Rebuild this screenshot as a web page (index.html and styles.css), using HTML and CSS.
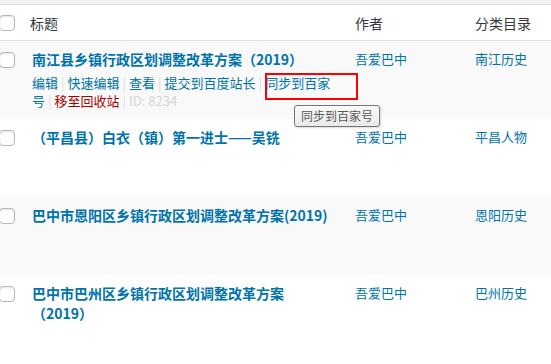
FILE: index.html
```html
<!DOCTYPE html>
<html>
<head>
    <meta charset="UTF-8">
    <title>文章</title>
    <link rel="stylesheet" href="styles.css">
</head>
<body>
    <div class="top-strip"></div>
    <div class="post-list">
        <div class="row head">
            <div class="cb"><span class="box"></span></div>
            <div class="col-title">标题</div>
            <div class="col-author">作者</div>
            <div class="col-cat">分类目录</div>
        </div>

        <div class="row alt">
            <div class="cb"><span class="box"></span></div>
            <div class="col-title">
                <a class="row-title">南江县乡镇行政区划调整改革方案（2019）</a>
                <div class="row-actions"><a>编辑</a><span class="sep">|</span><a>快速编辑</a><span class="sep">|</span><a>查看</a><span class="sep">|</span><a>提交到百度站长</a><span class="sep">|</span><a class="sync">同步到百家号</a><span class="sep">|</span><a class="trash">移至回收站</a><span class="sep">|</span><span class="post-id">ID: 8234</span></div>
            </div>
            <div class="col-author"><a>吾爱巴中</a></div>
            <div class="col-cat"><a>南江历史</a></div>
        </div>

        <div class="row">
            <div class="cb"><span class="box"></span></div>
            <div class="col-title">
                <a class="row-title">（平昌县）白衣（镇）第一进士——吴铣</a>
            </div>
            <div class="col-author"><a>吾爱巴中</a></div>
            <div class="col-cat"><a>平昌人物</a></div>
        </div>

        <div class="row alt">
            <div class="cb"><span class="box"></span></div>
            <div class="col-title">
                <a class="row-title">巴中市恩阳区乡镇行政区划调整改革方案(2019)</a>
            </div>
            <div class="col-author"><a>吾爱巴中</a></div>
            <div class="col-cat"><a>恩阳历史</a></div>
        </div>

        <div class="row">
            <div class="cb"><span class="box"></span></div>
            <div class="col-title">
                <a class="row-title">巴中市巴州区乡镇行政区划调整改革方案（2019）</a>
            </div>
            <div class="col-author"><a>吾爱巴中</a></div>
            <div class="col-cat"><a>巴州历史</a></div>
        </div>
    </div>

    <!-- annotation box and native tooltip drawn over the list -->
    <div class="mark"></div>
    <div class="tooltip">同步到百家号</div>
</body>
</html>
```

FILE: styles.css
```css
body {
    margin: 0;
    padding: 0;
    font-family: "Noto Sans CJK SC", "Liberation Sans", sans-serif;
    background-color: #fff;
    color: #32373c;
    overflow: hidden;
    position: relative;
}
a {
    color: #0073aa;
    text-decoration: none;
}
.top-strip {
    height: 4px;
    background-color: #f1f1f1;
}
.post-list {
    border-top: 1px solid #e1e1e1;
}
.row {
    display: grid;
    grid-template-columns: 32px 323px 120px 1fr;
    height: 78px;
    box-sizing: border-box;
    background-color: #fff;
}
.row.alt {
    background-color: #f9f9f9;
}
.row.head {
    height: 36px;
    border-bottom: 1px solid #e1e1e1;
    align-items: center;
    font-size: 14px;
}
.row.head .col-title {
    margin-left: -2px;
}
.cb {
    padding-top: 11px;
}
.row.head .cb {
    padding-top: 0;
    display: flex;
    align-items: center;
}
.box {
    display: block;
    width: 16px;
    height: 16px;
    margin-left: -1px;
    box-sizing: border-box;
    border: 1px solid #b4b9be;
    border-radius: 4px;
    background-color: #fff;
    box-shadow: inset 0 1px 2px rgba(0,0,0,0.1);
}
.col-title {
    padding-right: 17px;
}
.row:not(.head) > div:not(.cb) {
    padding-top: 8px;
}
.row-title {
    display: block;
    font-size: 14px;
    font-weight: bold;
    line-height: 20px;
}
.col-author, .col-cat {
    font-size: 13px;
    line-height: 20px;
}
.row.head .col-author, .row.head .col-cat {
    font-size: 14px;
}
.row-actions {
    margin-top: 5px;
    font-size: 13px;
    line-height: 18px;
}
.sep {
    color: #ddd;
    padding: 0 3px;
}
.trash {
    color: #a00;
}
.post-id {
    color: #d4d4d4;
}
.mark {
    position: absolute;
    z-index: 2;
    left: 265px;
    top: 73px;
    width: 93px;
    height: 27px;
    box-sizing: border-box;
    border: 2px solid #ff0000;
}
.tooltip {
    position: absolute;
    z-index: 3;
    left: 294px;
    top: 105px;
    width: 86px;
    height: 22px;
    box-sizing: border-box;
    border: 1px solid #767676;
    border-radius: 3px;
    background: linear-gradient(#fbfbfb, #eaeaea);
    box-shadow: 1px 1px 2px rgba(0,0,0,0.15);
    color: #575757;
    font-size: 12px;
    line-height: 20px;
    text-align: center;
}
```
